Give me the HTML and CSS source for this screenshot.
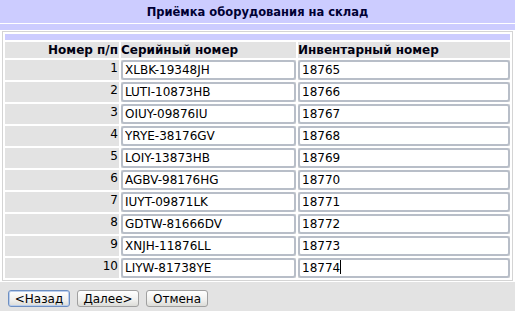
FILE: index.html
```html
<!DOCTYPE html>
<html lang="ru">
<head>
    <meta charset="UTF-8">
    <title>Приёмка оборудования</title>
    <link rel="stylesheet" href="styles.css">
</head>
<body>
    <div class="form">
        <div class="title">Приёмка оборудования на склад</div>
        <div class="band"></div>

        <table class="grid">
            <tr>
                <td class="strip" colspan="3"></td>
            </tr>
            <tr class="head">
                <th class="num">Номер п/п</th>
                <th>Серийный номер</th>
                <th>Инвентарный номер</th>
            </tr>
            <tr><td class="num">1</td><td><input class="field" value="XLBK-19348JH"></td><td><input class="field" value="18765"></td></tr>
            <tr><td class="num">2</td><td><input class="field" value="LUTI-10873HB"></td><td><input class="field" value="18766"></td></tr>
            <tr><td class="num">3</td><td><input class="field" value="OIUY-09876IU"></td><td><input class="field" value="18767"></td></tr>
            <tr><td class="num">4</td><td><input class="field" value="YRYE-38176GV"></td><td><input class="field" value="18768"></td></tr>
            <tr><td class="num">5</td><td><input class="field" value="LOIY-13873HB"></td><td><input class="field" value="18769"></td></tr>
            <tr><td class="num">6</td><td><input class="field" value="AGBV-98176HG"></td><td><input class="field" value="18770"></td></tr>
            <tr><td class="num">7</td><td><input class="field" value="IUYT-09871LK"></td><td><input class="field" value="18771"></td></tr>
            <tr><td class="num">8</td><td><input class="field" value="GDTW-81666DV"></td><td><input class="field" value="18772"></td></tr>
            <tr><td class="num">9</td><td><input class="field" value="XNJH-11876LL"></td><td><input class="field" value="18773"></td></tr>
            <tr><td class="num">10</td><td><input class="field" value="LIYW-81738YE"></td><td><span class="field last">18774<span class="caret"></span></span></td></tr>
        </table>
    </div>

    <div class="buttons">
        <button class="btn focused">&lt;Назад</button>
        <button class="btn">Далее&gt;</button>
        <button class="btn">Отмена</button>
    </div>
</body>
</html>
```

FILE: styles.css
```css
body {
    margin: 0;
    background-color: #e3e3e3;
    font-family: "DejaVu Sans", Verdana, sans-serif;
    font-size: 12px;
    color: #000;
}

.form {
    background-color: #fff;
    padding-bottom: 1px;
}

.title {
    background-color: #ccccff;
    color: #000033;
    font-weight: bold;
    font-size: 11.5px;
    text-align: center;
    height: 23px;
    line-height: 24px;
}

.band {
    background-color: #ccccff;
    height: 6px;
    margin-top: 1px;
    margin-bottom: 1px;
}

.grid {
    border: 1px solid #d4d4d4;
    border-spacing: 2px;
    margin: 0 2px;
    width: 511px;
}

.grid td, .grid th {
    background-color: #e3e3e3;
    padding: 0;
}

.grid td.strip {
    background-color: #ccccff;
    height: 6px;
}

.grid th {
    font-weight: bold;
    text-align: left;
    height: 16px;
    color: #000011;
}

.grid .num {
    width: 113px;
    text-align: right;
    vertical-align: top;
    padding-right: 1px;
    padding-top: 1px;
}

.grid th.num {
    vertical-align: middle;
    padding-top: 0;
}

.grid td:nth-child(2) {
    width: 175px;
}

.field {
    display: block;
    box-sizing: border-box;
    width: 100%;
    height: 20px;
    margin: 0;
    padding: 0 2px;
    border: 2px solid #b8bec8;
    border-radius: 3px;
    background-color: #fff;
    font-family: "DejaVu Sans", Verdana, sans-serif;
    font-size: 12px;
    color: #000;
    line-height: 16px;
}

.caret {
    display: inline-block;
    width: 1px;
    height: 14px;
    background-color: #000;
    vertical-align: -2px;
}

.buttons {
    display: flex;
    gap: 7px;
    padding: 8px 8px 0 8px;
}

.btn {
    height: 17px;
    width: 62px;
    padding: 0;
    border: 1px solid #a0a0a0;
    border-radius: 3px;
    background: linear-gradient(#ffffff, #f0f0ee 60%, #dcdcd8);
    font-family: "DejaVu Sans", Verdana, sans-serif;
    font-size: 12px;
    color: #000;
}

.btn.focused {
    border-color: #6d8fc2;
    box-shadow: inset 0 0 0 1px #b9cdec;
}
```
